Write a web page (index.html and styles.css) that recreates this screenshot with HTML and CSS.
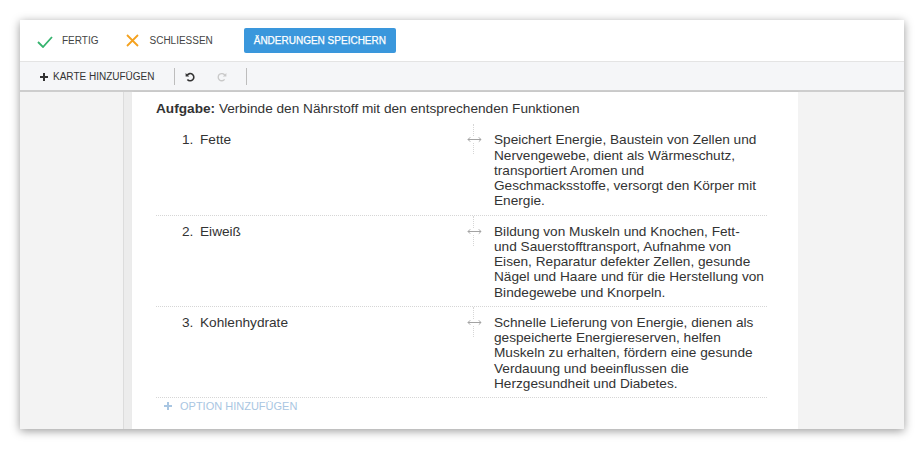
FILE: index.html
```html
<!DOCTYPE html>
<html lang="de">
<head>
    <meta charset="UTF-8">
    <title>Karte bearbeiten</title>
    <link rel="stylesheet" href="styles.css">
</head>
<body>
    <div class="window">
        <header class="topbar">
            <a class="action done">
                <svg width="16" height="12" viewBox="0 0 16 12"><path d="M1 6 L6 11 L15 1" fill="none" stroke="#35b36e" stroke-width="1.8"/></svg>
                <span>FERTIG</span>
            </a>
            <a class="action close">
                <svg width="13" height="13" viewBox="0 0 13 13"><path d="M1 1 L12 12 M12 1 L1 12" fill="none" stroke="#f4a21f" stroke-width="1.8"/></svg>
                <span>SCHLIESSEN</span>
            </a>
            <button class="btn-save">ÄNDERUNGEN SPEICHERN</button>
        </header>

        <nav class="toolbar">
            <a class="tool add-card">
                <svg width="8" height="8" viewBox="0 0 8 8"><path d="M4 0 V8 M0 4 H8" stroke="#333" stroke-width="2"/></svg>
                <span>KARTE HINZUFÜGEN</span>
            </a>
            <span class="divider"></span>
            <a class="tool icon undo">
                <svg width="10" height="10" viewBox="0 0 10 10"><path d="M2.2 3.2 A3.6 3.6 0 1 1 2.4 7.4" fill="none" stroke="#333" stroke-width="1.6"/><path d="M0.6 1 L0.6 4.6 L4.2 4.6 Z" fill="#333"/></svg>
            </a>
            <a class="tool icon redo">
                <svg width="10" height="10" viewBox="0 0 10 10"><path d="M7.8 3.2 A3.6 3.6 0 1 0 7.6 7.4" fill="none" stroke="#c9c9c9" stroke-width="1.3"/><path d="M9.4 1 L9.4 4.6 L5.8 4.6 Z" fill="#c9c9c9"/></svg>
            </a>
            <span class="divider"></span>
        </nav>

        <main class="workspace">
            <aside class="side-left"></aside>
            <div class="gutter"></div>
            <section class="card">
                <p class="task"><strong>Aufgabe:</strong> Verbinde den Nährstoff mit den entsprechenden Funktionen</p>

                <div class="pairs">
                    <div class="pair">
                        <div class="term"><span class="num">1.</span>Fette</div>
                        <div class="link"><svg width="15" height="7" viewBox="0 0 15 7"><path d="M1 3.5 H14 M3.2 1.3 L1 3.5 L3.2 5.7 M11.8 1.3 L14 3.5 L11.8 5.7" fill="none" stroke="#a3a3a3" stroke-width="1"/></svg></div>
                        <div class="match">Speichert Energie, Baustein von Zellen und<br>Nervengewebe, dient als Wärmeschutz,<br>transportiert Aromen und<br>Geschmacksstoffe, versorgt den Körper mit<br>Energie.</div>
                    </div>
                    <div class="pair">
                        <div class="term"><span class="num">2.</span>Eiweiß</div>
                        <div class="link"><svg width="15" height="7" viewBox="0 0 15 7"><path d="M1 3.5 H14 M3.2 1.3 L1 3.5 L3.2 5.7 M11.8 1.3 L14 3.5 L11.8 5.7" fill="none" stroke="#a3a3a3" stroke-width="1"/></svg></div>
                        <div class="match">Bildung von Muskeln und Knochen, Fett-<br>und Sauerstofftransport, Aufnahme von<br>Eisen, Reparatur defekter Zellen, gesunde<br>Nägel und Haare und für die Herstellung von<br>Bindegewebe und Knorpeln.</div>
                    </div>
                    <div class="pair">
                        <div class="term"><span class="num">3.</span>Kohlenhydrate</div>
                        <div class="link"><svg width="15" height="7" viewBox="0 0 15 7"><path d="M1 3.5 H14 M3.2 1.3 L1 3.5 L3.2 5.7 M11.8 1.3 L14 3.5 L11.8 5.7" fill="none" stroke="#a3a3a3" stroke-width="1"/></svg></div>
                        <div class="match">Schnelle Lieferung von Energie, dienen als<br>gespeicherte Energiereserven, helfen<br>Muskeln zu erhalten, fördern eine gesunde<br>Verdauung und beeinflussen die<br>Herzgesundheit und Diabetes.</div>
                    </div>
                </div>

                <a class="add-option">
                    <svg width="8" height="8" viewBox="0 0 8 8"><path d="M4 0 V8 M0 4 H8" stroke="#a9c6e2" stroke-width="2"/></svg>
                    <span>OPTION HINZUFÜGEN</span>
                </a>
            </section>
            <aside class="side-right"></aside>
        </main>
    </div>
</body>
</html>
```

FILE: styles.css
```css
body {
    margin: 0;
    padding: 20px;
    background-color: #fff;
    font-family: "Liberation Sans", Arial, sans-serif;
    color: #333;
}
.window {
    width: 884px;
    height: 409px;
    background-color: #fff;
    box-shadow: 0 2px 9px rgba(0,0,0,0.4);
    display: flex;
    flex-direction: column;
    overflow: hidden;
}
.topbar {
    height: 41px;
    display: flex;
    align-items: center;
    padding-left: 17px;
    border-bottom: 1px solid #e4e4e4;
    flex-shrink: 0;
}
.action {
    display: flex;
    align-items: center;
    font-size: 10px;
    color: #444;
    cursor: pointer;
}
.action.done svg {
    margin-right: 9px;
    margin-top: 2px;
}
.action.done {
    margin-right: 28px;
}
.action.close svg {
    margin-right: 10px;
}
.btn-save {
    margin-left: 31px;
    width: 152px;
    height: 25px;
    border: none;
    border-radius: 2px;
    background-color: #3a97dc;
    color: #fff;
    font-family: inherit;
    font-size: 10px;
    -webkit-text-stroke: 0.25px #fff;
    padding: 0;
    cursor: pointer;
}
.toolbar {
    display: flex;
    align-items: center;
    padding-left: 20px;
    padding-top: 1px;
    box-sizing: border-box;
    height: 30px;
    background-color: #f5f6f8;
    border-bottom: 2px solid #cdcdcd;
    flex-shrink: 0;
}
.tool {
    display: flex;
    align-items: center;
    font-size: 10px;
    color: #333;
    cursor: pointer;
}
.add-card svg {
    margin-right: 5px;
}
.divider {
    width: 1px;
    height: 17px;
    background-color: #bdbdbd;
    margin-left: 19px;
}
.tool.undo {
    margin-left: 10px;
}
.tool.redo {
    margin-left: 22px;
}
.workspace {
    flex: 1;
    display: flex;
    background-color: #f3f3f3;
}
.side-left {
    width: 103px;
    border-right: 1px solid #dcdcdc;
}
.gutter {
    width: 8px;
    background-color: #ececec;
}
.card {
    width: 642px;
    background-color: #fff;
    padding: 9px 0 0 24px;
    box-shadow: 1px 0 2px rgba(0,0,0,0.06);
}
.task {
    margin: 0 0 8px;
    font-size: 13.65px;
    line-height: 15.25px;
}
.pairs {
    width: 611px;
}
.pair {
    display: grid;
    grid-template-columns: 304px 28px 279px;
    padding: 8px 0 6px;
    border-bottom: 1px dotted #d6d6d6;
    font-size: 13.65px;
    line-height: 15.25px;
}
.term {
    padding-left: 26px;
    display: flex;
}
.num {
    width: 18px;
}
.link {
    position: relative;
    display: flex;
    justify-content: center;
    align-items: flex-start;
    padding-top: 4px;
}
.link::before {
    content: "";
    position: absolute;
    left: 13px;
    top: -8px;
    height: 30px;
    border-left: 1px dotted #d6d6d6;
}
.link svg {
    position: relative;
    background-color: #fff;
}
.match {
    padding-left: 6px;
    white-space: nowrap;
}
.add-option {
    display: flex;
    align-items: center;
    margin: 2px 0 0 8px;
    font-size: 11px;
    color: #a9c6e2;
    cursor: pointer;
}
.add-option svg {
    margin-right: 8px;
}
.side-right {
    flex: 1;
    background-color: #f3f3f3;
}
```
